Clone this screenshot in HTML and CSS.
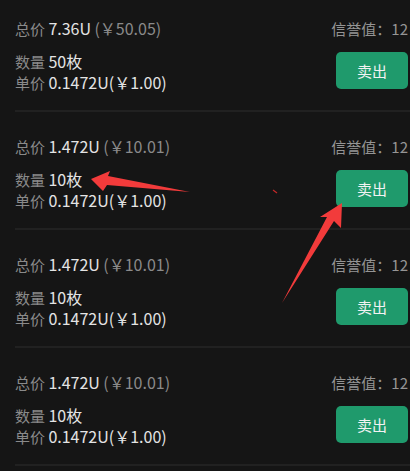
FILE: index.html
```html
<!DOCTYPE html>
<html>
<head>
    <meta charset="utf-8">
    <title>挂单列表</title>
    <link rel="stylesheet" href="styles.css">
</head>
<body>
    <div class="order-list">
        <div class="order-item">
            <div class="order-top">
                <div><span class="label">总价</span> <span class="value">7.36U</span> <span class="sub">(￥50.05)</span></div>
                <div class="credit">信誉值：12</div>
            </div>
            <div class="order-bottom">
                <div class="order-info">
                    <div><span class="label">数量</span> <span class="value">50枚</span></div>
                    <div><span class="label">单价</span> <span class="value">0.1472U(￥1.00)</span></div>
                </div>
                <button class="sell-btn">卖出</button>
            </div>
        </div>
        <div class="order-item">
            <div class="order-top">
                <div><span class="label">总价</span> <span class="value">1.472U</span> <span class="sub">(￥10.01)</span></div>
                <div class="credit">信誉值：12</div>
            </div>
            <div class="order-bottom">
                <div class="order-info">
                    <div><span class="label">数量</span> <span class="value">10枚</span></div>
                    <div><span class="label">单价</span> <span class="value">0.1472U(￥1.00)</span></div>
                </div>
                <button class="sell-btn">卖出</button>
            </div>
        </div>
        <div class="order-item">
            <div class="order-top">
                <div><span class="label">总价</span> <span class="value">1.472U</span> <span class="sub">(￥10.01)</span></div>
                <div class="credit">信誉值：12</div>
            </div>
            <div class="order-bottom">
                <div class="order-info">
                    <div><span class="label">数量</span> <span class="value">10枚</span></div>
                    <div><span class="label">单价</span> <span class="value">0.1472U(￥1.00)</span></div>
                </div>
                <button class="sell-btn">卖出</button>
            </div>
        </div>
        <div class="order-item">
            <div class="order-top">
                <div><span class="label">总价</span> <span class="value">1.472U</span> <span class="sub">(￥10.01)</span></div>
                <div class="credit">信誉值：12</div>
            </div>
            <div class="order-bottom">
                <div class="order-info">
                    <div><span class="label">数量</span> <span class="value">10枚</span></div>
                    <div><span class="label">单价</span> <span class="value">0.1472U(￥1.00)</span></div>
                </div>
                <button class="sell-btn">卖出</button>
            </div>
        </div>
    </div>

    <!-- annotation arrows drawn over the screenshot -->
    <svg class="marks" width="410" height="471" viewBox="0 0 410 471">
        <polygon points="91,179 110,171 108,176 190,192 107,185 103,191" fill="#f23b3b"/>
        <line x1="273" y1="190" x2="277" y2="193" stroke="#c62828" stroke-width="1.2"/>
        <polygon points="342,203 320,217 327,217 282,303 334,221 341,228" fill="#f23b3b"/>
    </svg>
</body>
</html>
```

FILE: styles.css
```css
html, body {
    margin: 0;
    padding: 0;
    height: 100%;
    background: #151515;
    overflow: hidden;
}

body {
    position: relative;
    font-family: "Noto Sans CJK SC", "Noto Sans", sans-serif;
    font-size: 15px;
    line-height: 21px;
    color: #e4e4e4;
}

.order-list {
    display: flex;
    flex-direction: column;
}

.order-item {
    margin-left: 15px;
    padding: 24px 2px 17px 0;
    border-bottom: 2px solid #212121;
}

.order-item:first-child {
    padding-top: 18px;
}

.order-top {
    display: flex;
    justify-content: space-between;
    align-items: center;
}

.order-bottom {
    display: flex;
    justify-content: space-between;
    align-items: center;
    margin-top: 12px;
}

.label {
    color: #8a8a8a;
}

.value {
    color: #e4e4e4;
    font-size: 16px;
}

.sub {
    color: #8a8a8a;
    font-size: 16px;
}

.credit {
    color: #959595;
}

.sell-btn {
    width: 72px;
    height: 37px;
    margin-bottom: 3px;
    border: 0;
    border-radius: 5px;
    background: #1f9a6c;
    color: #f2f2f2;
    font-family: inherit;
    font-size: 15px;
    padding: 0;
}

.marks {
    position: absolute;
    left: 0;
    top: 0;
    pointer-events: none;
}
```
